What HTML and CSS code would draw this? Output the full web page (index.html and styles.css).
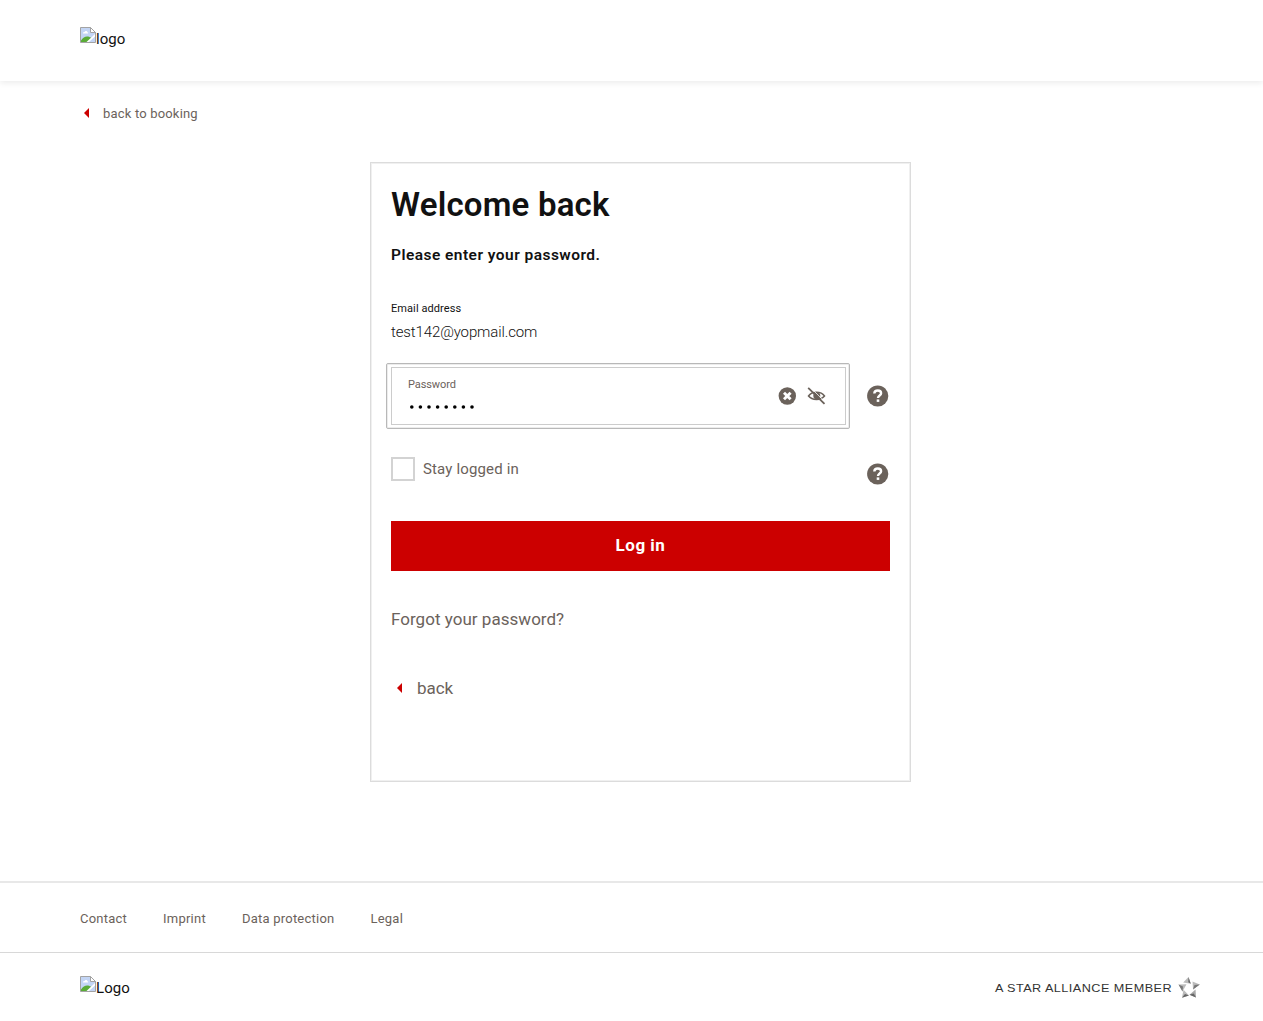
FILE: index.html
```html
<!DOCTYPE html>
<html lang="en">
<head>
<meta charset="utf-8">
<title>Welcome back</title>
<link rel="stylesheet" href="styles.css">
</head>
<body>
<svg class="defs" width="0" height="0" aria-hidden="true">
  <symbol id="broken" viewBox="0 0 16 16">
    <path d="M.5.5h10l5 5v10H.5z" fill="#c3d5f5" stroke="#a3a3a3"/>
    <path d="M3 6.500c0-1.300 1-1.600 1.600-1.400C5 3.600 7.300 3.800 7.400 5.200c1 0 1 1.300.3 1.300z" fill="#fff"/>
    <path d="M1 15v-1.500C3 10.500 5.500 9 8 9.500c1.500.3 2.500 1 3.500 1.500l-4 4z" fill="#5aac37"/>
    <path d="M10.500.5v5h5z" fill="#fff" stroke="#a3a3a3"/>
    <path d="M15 7v2.500L9 15H6.500z" fill="#fff"/>
  </symbol>
  <symbol id="help" viewBox="0 0 22 22">
    <circle cx="10.700" cy="11" r="10.600" fill="#6b625b"/>
    <path d="M7.300 8.500C7.400 6.500 8.800 5.500 10.800 5.500c2 0 3.300 1 3.300 2.800 0 2.300-3.100 2.100-3.100 4.700" fill="none" stroke="#fff" stroke-width="2.400"/>
    <path d="M9.700 14.400h2.600v2.500H9.700z" fill="#fff"/>
  </symbol>
</svg>
<header class="header"><div class="logo"><svg width="16" height="16"><use href="#broken"/></svg><span>logo</span></div></header>
<main class="main">
  <a class="back-booking"><i class="arrow"></i><span>back to booking</span></a>
  <section class="card">
    <h1>Welcome back</h1>
    <p class="intro">Please enter your password.</p>
    <div class="email-label">Email address</div>
    <div class="email">test142@yopmail.com</div>
    <div class="field-row">
      <div class="focus"><div class="field">
        <div class="field-text"><div class="field-label">Password</div>
          <svg class="dots" width="70" height="6" viewBox="0 0 70 6"><circle cx="3.800" cy="3" r="1.800"/><circle cx="12.400" cy="3" r="1.800"/><circle cx="21" cy="3" r="1.800"/><circle cx="29.600" cy="3" r="1.800"/><circle cx="38.200" cy="3" r="1.800"/><circle cx="46.800" cy="3" r="1.800"/><circle cx="55.400" cy="3" r="1.800"/><circle cx="64" cy="3" r="1.800"/></svg>
        </div>
        <svg class="clear" width="18" height="18" viewBox="0 0 18 18"><circle cx="9.300" cy="9" r="8.700" fill="#6b625b"/><path d="M6 5.700l6.600 6.600m0-6.600L6 12.300" stroke="#fff" stroke-width="2.900"/></svg>
        <svg class="eye" width="19" height="18" viewBox="0 0 19 18" fill="none" stroke="#6b625b"><path d="M1.500 9C5 4 14 4 17.500 9 14 13.500 5 13.500 1.500 9z" stroke-width="1.500"/><circle cx="9.800" cy="8.800" r="3.500" fill="#6b625b" stroke="none"/><path d="M2.800 0L18.800 15.500" stroke="#fff" stroke-width=".8"/><path d="M1.200.8l16.300 16" stroke-width="1.800"/></svg>
      </div></div>
      <svg width="22" height="22"><use href="#help"/></svg>
    </div>
    <div class="stay-row"><i class="check"></i><span>Stay logged in</span><svg width="22" height="22"><use href="#help"/></svg></div>
    <button class="login"><span>Log in</span></button>
    <a class="forgot">Forgot your password?</a>
    <a class="back"><i class="arrow"></i><span>back</span></a>
  </section>
</main>
<footer class="footer">
  <nav class="links"><a>Contact</a><a>Imprint</a><a>Data protection</a><a>Legal</a></nav>
  <div class="brand"><div class="logo"><svg width="16" height="16"><use href="#broken"/></svg><span>Logo</span></div>
    <div class="alliance"><span>A STAR ALLIANCE MEMBER</span>
      <svg width="22" height="22" viewBox="0 0 22 22">
        <path d="M10.500 0l2.300 6.800L5.200 5.500z" fill="#bbb"/><path d="M10.500 0l2.300 6.800-2.500-1.500z" fill="#666"/>
        <path d="M21.800 7.500l-6.800 5L14.500 4.500z" fill="#bbb"/><path d="M21.800 7.500l-6.800 5 1.500-4.500z" fill="#777"/>
        <path d="M18 20.500l-6.500-2.800 6-5.200z" fill="#aaa"/><path d="M18 20.500l-6.500-2.800 4.200-1.200z" fill="#666"/>
        <path d="M4 20.800l1.500-8 5.500 5.700z" fill="#bbb"/><path d="M4 20.800l7-2.300-4-1.500z" fill="#666"/>
        <path d="M.5 7.500l8-.3L4.500 14.500z" fill="#bbb"/><path d="M.5 7.500l4 7 .5-5z" fill="#777"/>
      </svg>
    </div>
  </div>
</footer>
</body>
</html>
```
FILE: styles.css
```css
* { box-sizing: border-box; }
body { margin: 0; height: 1021px; display: flex; flex-direction: column; background: #fff; color: #111; font-family: Roboto, "Liberation Sans", sans-serif; font-size: 15px; overflow: hidden; }
.defs { display: none; }
svg, i { display: block; flex: none; }
span, a { white-space: nowrap; }
.header { height: 81px; padding: 27px 80px 0; box-shadow: 0 2px 6px rgba(0,0,0,.08); flex: none; }
.logo { display: flex; height: 24px; line-height: 24px; letter-spacing: .05px; }
.main { height: 800px; padding-top: 22px; display: flex; flex-direction: column; flex: none; }
.arrow { width: 5px; height: 10px; background: #c00; clip-path: polygon(100% 0, 0 50%, 100% 100%); }
.back-booking { display: flex; align-items: center; gap: 14px; height: 20px; margin-left: 84px; color: #6b625b; font-size: 13px; letter-spacing: .18px; }
.card { width: 541px; height: 620px; margin: 39px 0 0 370px; padding: 23px 20px 0; border: 1px solid #dcdcdc; box-shadow: inset 0 0 0 1px #f0f0f0; display: flex; flex-direction: column; }
h1 { margin: 0; font-size: 33px; line-height: 38px; font-weight: 600; letter-spacing: .2px; white-space: nowrap; }
.intro { margin: 21px 0 0; font-size: 15.500px; line-height: 20px; font-weight: 600; letter-spacing: .46px; white-space: nowrap; }
.email-label { margin-top: 36px; font-size: 11px; line-height: 16px; letter-spacing: .08px; }
.email { margin-top: 5px; font-size: 15px; line-height: 20px; font-weight: 300; letter-spacing: -.12px; }
.field-row { margin: 21px 0 0 -5px; display: flex; align-items: center; gap: 17px; }
.focus { width: 464px; height: 66px; padding: 3px 3px 3px 4px; border: 1px solid #b8b8b8; box-shadow: inset 0 0 0 1px #ececec; border-radius: 2px; }
.field { height: 58px; border: 1px solid #ccc; padding: 0 19px 0 16px; display: flex; }
.field-text { flex: 1; padding-top: 9px; }
.field-label { color: #6b625b; font-size: 11px; line-height: 15px; letter-spacing: -.1px; }
.dots { margin-top: 12px; }
.clear { margin-top: 19px; }
.eye { margin: 19px 0 0 11px; }
.stay-row { margin-top: 28px; height: 24px; display: flex; color: #6b625b; line-height: 24px; letter-spacing: .15px; }
.check { width: 24px; height: 24px; margin-right: 8px; border: 2px solid #d3d3d3; }
.stay-row svg { margin: 5.500px 1px 0 auto; }
.login { height: 50px; margin: 40px 0 0; border: 0; padding: 0 0 2px; background: #c00; color: #fff; font: 700 17px Roboto, sans-serif; letter-spacing: .5px; }
.forgot { margin-top: 36px; line-height: 24px; font-size: 17px; color: #6b625b; letter-spacing: .03px; }
.back { display: flex; align-items: center; gap: 15px; height: 24px; margin: 45px 0 0 6px; font-size: 17px; color: #6b625b; letter-spacing: -.05px; }
.footer { height: 140px; flex: none; border-top: 2px solid #e8e8e8; }
.links { height: 70px; border-bottom: 1px solid #d8d8d8; padding: 1px 0 0 80px; display: flex; align-items: center; gap: 36px; color: #6b625b; font-size: 13px; letter-spacing: .23px; }
.brand { padding: 23px 63px 0 80px; display: flex; justify-content: space-between; }
.alliance { display: flex; align-items: center; gap: 6px; font: 11px/22px "Liberation Sans", sans-serif; letter-spacing: .4px; color: #333; }
.alliance span { transform: scaleX(1.150); transform-origin: right; }
```
